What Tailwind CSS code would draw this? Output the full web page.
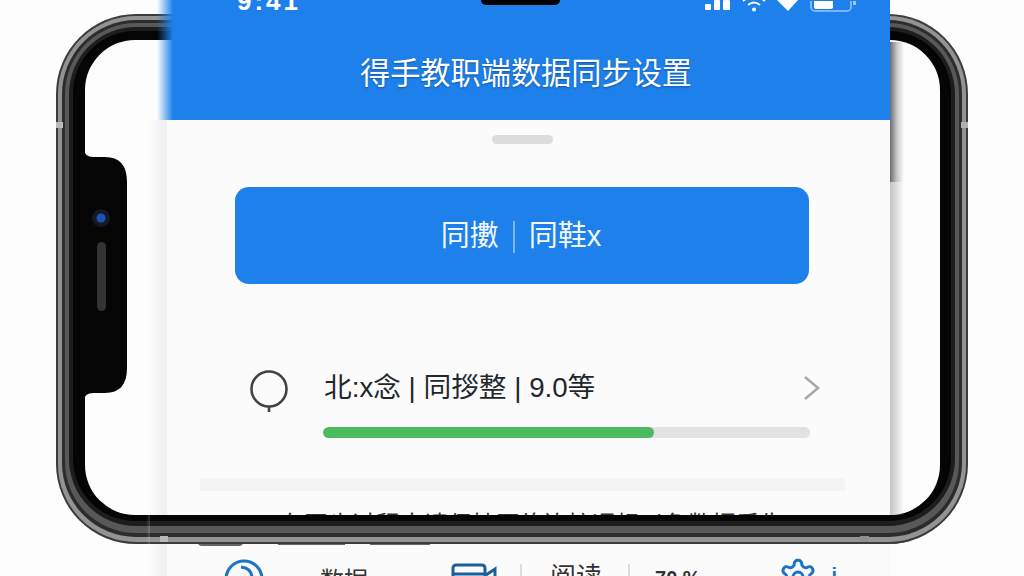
<!DOCTYPE html>
<html lang="zh-CN">
<head>
  <meta charset="UTF-8">
  <meta name="viewport" content="width=device-width, initial-scale=1.0">
  <title>数据同步设置</title>
  <script src="https://cdn.jsdelivr.net/npm/@tailwindcss/browser@4"></script>
</head>
<body class="bg-[#fdfdfd] font-['Liberation_Sans','Noto_Sans_CJK_SC',sans-serif]">
  <div class="relative w-[1024px] h-[576px] overflow-hidden bg-[#fdfdfd]">

    <!-- phone frame, behind the screen card -->
    <svg class="absolute inset-0" width="1024" height="576" viewBox="0 0 1024 576">
      <defs>
        <g id="frame">
          <rect x="56" y="14" width="912" height="530" rx="80" fill="#3c3c3c"/>
          <rect x="58" y="16" width="908" height="526" rx="78" fill="#939393"/>
          <rect x="62" y="20" width="900" height="517" rx="74" fill="#2c2c2c"/>
          <rect x="65" y="23" width="894" height="510" rx="71" fill="#585858"/>
          <rect x="69" y="27" width="886" height="499" rx="67" fill="#1d1d1d"/>
          <rect x="73" y="31" width="878" height="490" rx="62" fill="#050505"/>
          <rect x="85" y="40" width="855" height="475" rx="50" fill="#fdfdfd"/>
        </g>
        <clipPath id="bottom-bezel"><rect x="150" y="515" width="760" height="30"/></clipPath>
      </defs>
      <use href="#frame"/>
      <rect x="56" y="122" width="7" height="6" fill="#b9b9b9"/>
      <rect x="961" y="122" width="7" height="6" fill="#b0b0b0"/>
      <!-- side notch -->
      <path d="M84 150 Q85 157 93 157 H105 Q127 157 127 182 V368 Q127 393 105 393 H93 Q85 393 84 400 Z" fill="#050505"/>
      <rect x="97" y="242" width="9" height="69" rx="4.5" fill="#333"/>
      <circle cx="101" cy="218" r="9" fill="#141a24"/>
      <circle cx="101" cy="218" r="4.5" fill="#1c52b8"/>
    </svg>

    <!-- soft shadows beside the card -->
    <div class="absolute left-[146px] top-[120px] w-[21px] h-[456px] bg-gradient-to-r from-transparent to-[#efefef]"></div>
    <div class="absolute left-[890px] top-[42px] w-[14px] h-[140px] bg-gradient-to-r from-[#6a6e72] via-[#c9c9c9] to-transparent"></div>
    <div class="absolute left-[890px] top-[182px] w-[14px] h-[334px] bg-gradient-to-r from-[#c4c4c4] to-transparent"></div>

    <!-- screen card -->
    <div class="absolute left-[157px] top-0 w-[733px] h-[576px] flex flex-col overflow-hidden">
      <header class="h-[120px] shrink-0 flex flex-col bg-gradient-to-r from-[#1e80ea]/0 via-[#1e80ea] via-[2.2%] to-[#1e80ea]">
        <div class="relative h-[12px] flex items-end justify-between pl-[80px] pr-[32px]">
          <span class="text-[26px] leading-[26px] font-bold tracking-[3px] text-white -mb-[2px]">9:41</span>
          <div class="absolute left-[324px] top-0 w-[79px] h-[5px] bg-black rounded-b-[7px]"></div>
          <div class="flex items-end gap-[11px] h-[12px]">
            <svg width="26" height="12" viewBox="0 0 26 12" fill="#fff"><rect x="0" y="4" width="6" height="6" rx="1"/><rect x="9" y="0" width="6" height="10" rx="1"/><rect x="18" y="0" width="7" height="10" rx="1"/></svg>
            <svg width="24" height="12" viewBox="0 0 24 12" fill="none" stroke="#fff" stroke-width="1.8"><path d="M1 1 Q12 -7 23 1"/><path d="M6 5 Q12 0 18 5"/><circle cx="12" cy="9.5" r="2" fill="#fff" stroke="none"/></svg>
            <svg width="22" height="12" viewBox="0 0 22 12" fill="#fff"><path d="M0 0 H21 L11 11 Z"/></svg>
            <svg width="48" height="11" viewBox="0 0 48 11"><rect x="1" y="-6" width="40" height="16" rx="4" fill="none" stroke="#9cc6f5" stroke-width="1.5"/><rect x="4" y="-4" width="19" height="12" rx="2" fill="#fff"/><path d="M43 -1 h3 v5 h-3" fill="#9cc6f5"/></svg>
          </div>
        </div>
        <h1 class="mt-[43px] text-center text-[30.2px] leading-[38px] text-white pl-[5px] font-normal [text-shadow:0_1px_2px_rgba(0,30,80,0.45)]">得手教职端数据同步设置</h1>
      </header>

      <main class="flex-1 ml-[10px] bg-[#fbfbfb] pl-[68px] flex flex-col">
        <div class="w-[574px] flex flex-col">
          <div class="mt-[15px] mx-auto w-[61px] h-[9px] rounded-full bg-[#dcdcdc]"></div>

          <button class="mt-[43px] h-[97px] rounded-[14px] bg-[#1e80ea] flex items-center justify-center gap-[14px] text-[29px] text-[#f2f8ff] pr-[2px] pt-[3px]">
            <span>同擻</span>
            <span class="w-[2px] h-[32px] bg-[#7db6f3]"></span>
            <span>同鞋x</span>
          </button>

          <div class="mt-[85px] ml-[14px] h-[44px] flex items-center">
            <svg class="-mt-[1px]" width="40" height="44" viewBox="0 0 40 44" fill="none" stroke="#3f4347" stroke-width="2.6"><circle cx="20" cy="20" r="17.5"/><path d="M20 37.5 V43"/></svg>
            <span class="ml-[35px] text-[27.7px] leading-[36px] text-[#23272b] -mt-[7px] flex-1">北:x念 | 同拶整 | 9.0等</span>
            <svg class="mr-[-12px] -mt-[6px]" width="18" height="26" viewBox="0 0 18 26" fill="none" stroke="#a9a9a9" stroke-width="2.6"><path d="M2 2 L15 13 L2 24"/></svg>
          </div>

          <div class="mt-[14px] ml-[88px] w-[487px] h-[11px] rounded-full bg-[#e2e2e2] overflow-hidden">
            <div class="h-full rounded-full bg-[#4cba5f]" style="width: 68%"></div>
          </div>

          <div class="mt-[40px] -ml-[35px] w-[645px] h-[13px] bg-[#f4f4f4]"></div>

          <p class="mt-[18px] ml-[45px] h-[32px] text-[24px] leading-[32px] text-[#333] whitespace-nowrap">在同步过程中请保持网络连接通畅以免数据丢失</p>

          <!-- what is left of the row under the bezel -->
          <div class="-ml-[37px] h-[5px] flex">
            <span class="w-[45px] h-[5px] rounded-b-[4px] border-x-2 border-b-2 border-[#666]"></span>
            <span class="ml-[35px] w-[67px] h-[4px] bg-[#666]"></span>
            <span class="ml-[25px] w-[60px] h-[4px] bg-[#666]"></span>
          </div>

          <nav class="mt-[11px] -ml-[11px] w-[640px] flex items-start whitespace-nowrap">
            <svg class="mt-[2px] shrink-0" width="40" height="40" viewBox="0 0 40 40" fill="none" stroke="#1a73c9" stroke-width="3"><circle cx="20" cy="20" r="18"/><path d="M17 8 Q27 9 28 18"/></svg>
            <span class="ml-[56px] mt-[9px] text-[24px] leading-[30px] text-[#333]">数据</span>
            <svg class="ml-[83px] mt-[6px] shrink-0" width="46" height="30" viewBox="0 0 46 30" fill="none" stroke="#1a5f9e" stroke-width="3"><rect x="2" y="2" width="32" height="26" rx="3"/><path d="M2 11 H34"/><path d="M35 12 L44 6 V22 L35 18"/></svg>
            <span class="ml-[23px] mt-[7px] w-[2px] h-[24px] bg-[#ddd]"></span>
            <span class="ml-[28px] mt-[4px] text-[26px] leading-[32px] text-[#333]">阅读</span>
            <span class="ml-[26px] mt-[7px] w-[2px] h-[24px] bg-[#ddd]"></span>
            <span class="ml-[25px] mt-[9px] text-[20px] leading-[24px] font-bold text-[#333]">70 %</span>
            <svg class="ml-[77px] shrink-0" width="40" height="40" viewBox="0 0 24 24" fill="none" stroke="#1a73c9" stroke-width="1.8"><path d="M12.22 2h-.44a2 2 0 0 0-2 2v.18a2 2 0 0 1-1 1.73l-.43.25a2 2 0 0 1-2 0l-.15-.08a2 2 0 0 0-2.73.73l-.22.38a2 2 0 0 0 .73 2.73l.15.1a2 2 0 0 1 1 1.72v.51a2 2 0 0 1-1 1.74l-.15.09a2 2 0 0 0-.73 2.73l.22.38a2 2 0 0 0 2.73.73l.15-.08a2 2 0 0 1 2 0l.43.25a2 2 0 0 1 1 1.73V20a2 2 0 0 0 2 2h.44a2 2 0 0 0 2-2v-.18a2 2 0 0 1 1-1.73l.43-.25a2 2 0 0 1 2 0l.15.08a2 2 0 0 0 2.73-.73l.22-.39a2 2 0 0 0-.73-2.73l-.15-.08a2 2 0 0 1-1-1.74v-.5a2 2 0 0 1 1-1.74l.15-.09a2 2 0 0 0 .73-2.73l-.22-.38a2 2 0 0 0-2.73-.73l-.15.08a2 2 0 0 1-2 0l-.43-.25a2 2 0 0 1-1-1.73V4a2 2 0 0 0-2-2z"/><circle cx="12" cy="12" r="3"/></svg>
            <span class="ml-[14px] mt-[6px] text-[20px] leading-[24px] font-bold text-[#1a73c9]">i</span>
          </nav>
        </div>
      </main>
    </div>

    <!-- bottom bezel passes in front of the card -->
    <svg class="absolute inset-0 pointer-events-none" width="1024" height="576" viewBox="0 0 1024 576">
      <use href="#frame" clip-path="url(#bottom-bezel)"/>
      <rect x="160" y="536" width="8" height="6" fill="#b9b9b9"/>
      <rect x="860" y="536" width="9" height="6" fill="#8e8e8e"/>
    </svg>
  </div>
</body>
</html>
